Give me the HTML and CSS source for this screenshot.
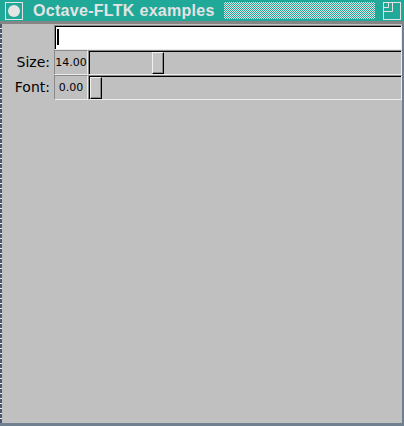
FILE: index.html
```html
<!DOCTYPE html>
<html lang="en">
<head>
    <meta charset="UTF-8">
    <title>Octave-FLTK examples</title>
    <link rel="stylesheet" href="styles.css">
</head>
<body>
    <div class="window">
        <div class="titlebar">
            <div class="menu-btn"><span class="dot"></span></div>
            <div class="title">Octave-FLTK examples</div>
            <div class="stipple"></div>
            <svg class="max-btn" width="18" height="18" viewBox="0 0 18 18">
                <rect x="0.5" y="0.5" width="17" height="17" fill="none" stroke="#e4e4e4"/>
                <path d="M9.5 0.5 V9.5 H0.5 M5.5 0.5 V5.5 H0.5" fill="none" stroke="#e4e4e4"/>
            </svg>
        </div>
        <div class="frame">
            <div class="edge"></div>
            <div class="content">
                <div class="row">
                    <span class="label"></span>
                    <div class="input"><span class="cursor"></span></div>
                </div>
                <div class="row">
                    <span class="label">Size:</span>
                    <div class="value">14.00</div>
                    <div class="slider"><span class="knob" style="margin-left: 62px"></span></div>
                </div>
                <div class="row">
                    <span class="label">Font:</span>
                    <div class="value">0.00</div>
                    <div class="slider"><span class="knob" style="margin-left: 0px"></span></div>
                </div>
            </div>
        </div>
    </div>
</body>
</html>
```

FILE: styles.css
```css
body {
    margin: 0;
    background-color: #708090;
    font-family: "DejaVu Sans", sans-serif;
}
.window {
    width: 404px;
    height: 426px;
    display: flex;
    flex-direction: column;
}
.titlebar {
    height: 21px;
    background-color: #20a898;
    border-bottom: 3px solid #858585;
    display: flex;
    align-items: center;
    padding: 0 3px 0 5px;
}
.menu-btn {
    width: 16px;
    height: 16px;
    border: 1px solid #e4e4e4;
    display: flex;
    align-items: center;
    justify-content: center;
}
.dot {
    width: 12px;
    height: 12px;
    border-radius: 50%;
    background-color: #e4e4e4;
}
.title {
    color: #e4e4e4;
    font-family: "Liberation Sans", Arial, sans-serif;
    font-weight: bold;
    font-size: 16px;
    letter-spacing: 0.3px;
    margin-left: 10px;
    white-space: nowrap;
}
.stipple {
    flex: 1;
    height: 17px;
    margin: 0 8px 0 9px;
    background: repeating-conic-gradient(#e4e4e4 0 25%, #20a898 0 50%) 0 0 / 2px 2px;
}
.max-btn {
    display: block;
}
.frame {
    flex: 1;
    display: flex;
    padding-right: 2px;
    padding-bottom: 3px;
}
.edge {
    width: 2px;
    background: repeating-linear-gradient(to bottom, #4a596d 0 4px, #e8ecf0 4px 5px);
}
.content {
    flex: 1;
    background-color: #c0c0c0;
    padding-top: 1px;
}
.row {
    display: flex;
    height: 25px;
}
.label {
    width: 52px;
    box-sizing: border-box;
    padding-right: 4px;
    text-align: right;
    font-size: 14px;
    line-height: 25px;
    color: #000;
}
.input,
.value,
.slider {
    box-sizing: border-box;
    height: 25px;
    border: 1px solid;
    border-color: #8a8a8a #ececec #ececec #8a8a8a;
}
.input {
    flex: 1;
    background-color: #fff;
    box-shadow: inset 1px 1px 0 #000;
    padding: 3px 0 0 2px;
}
.cursor {
    display: block;
    width: 2px;
    height: 16px;
    background-color: #000;
}
.value {
    width: 34px;
    background-color: #c0c0c0;
    font-size: 11px;
    line-height: 23px;
    text-align: center;
    color: #000;
}
.slider {
    flex: 1;
    background-color: #c0c0c0;
    box-shadow: inset 1px 1px 0 #000;
    padding: 1px 0 0 1px;
}
.knob {
    display: block;
    width: 12px;
    height: 22px;
    box-sizing: border-box;
    background-color: #c4c4c4;
    border: 1px solid;
    border-color: #f0f0f0 #000 #000 #f0f0f0;
    box-shadow: inset -1px -1px 0 #8a8a8a;
}
```
